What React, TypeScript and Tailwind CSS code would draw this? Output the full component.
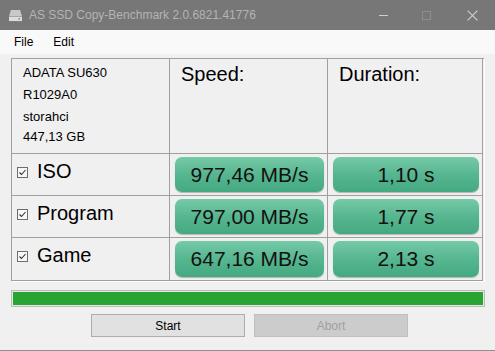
const rows = [
  { name: "ISO", speed: "977,46 MB/s", time: "1,10 s" },
  { name: "Program", speed: "797,00 MB/s", time: "1,77 s" },
  { name: "Game", speed: "647,16 MB/s", time: "2,13 s" },
];

function CheckBox() {
  return (
    <span className="w-[11px] h-[11px] border border-[#6d6d6d] bg-[#f7f7f7] flex items-center justify-center shrink-0">
      <svg viewBox="0 0 9 9" className="w-[9px] h-[9px]">
        <path d="M1.5 4.5 L3.5 6.5 L7.5 2" fill="none" stroke="#333" strokeWidth="1.1" />
      </svg>
    </span>
  );
}

function GreenBox({ text }: { text: string }) {
  return (
    <div className="h-full rounded-[7px] bg-gradient-to-b from-[#76caa7] via-[#56b690] to-[#44a981] shadow-[0_1px_1px_rgba(0,0,0,0.25)] flex items-center justify-center text-[21px] text-[#111]">
      {text}
    </div>
  );
}

export default function App() {
  return (
    <div className="w-[495px] h-[351px] bg-[#f0f0f0] flex flex-col overflow-hidden font-['Liberation_Sans',Arial,sans-serif]">
      {/* title bar */}
      <div className="h-[30px] bg-[#777777] flex items-center shrink-0">
        <svg viewBox="0 0 16 14" className="w-[15px] h-[13px] ml-[8px]">
          <path d="M3 1 H13 L15 8 H1 Z" fill="#c9c9c9" />
          <rect x="1" y="8.5" width="14" height="4.5" fill="#dcdcdc" />
          <rect x="11" y="10" width="2" height="1.5" fill="#8a8a8a" />
        </svg>
        <span className="ml-[6px] text-[12px] text-[#b4b4b4]">AS SSD Copy-Benchmark 2.0.6821.41776</span>
        <div className="ml-auto flex items-center h-full">
          <div className="w-[46px] flex justify-center pl-[6px]">
            <div className="w-[9px] h-px bg-[#cfcfcf]" />
          </div>
          <div className="w-[46px] flex justify-center">
            <div className="w-[9px] h-[9px] border border-[#8e8e8e]" />
          </div>
          <div className="w-[46px] flex justify-center">
            <svg viewBox="0 0 10 10" className="w-[11px] h-[11px]">
              <path d="M0.5 0.5 L9.5 9.5 M9.5 0.5 L0.5 9.5" stroke="#d0d0d0" strokeWidth="1" />
            </svg>
          </div>
        </div>
      </div>

      {/* menu */}
      <div className="h-[24px] bg-[#f9f9f9] flex items-center text-[12px] text-black shrink-0">
        <span className="ml-[14px]">File</span>
        <span className="ml-[20px]">Edit</span>
      </div>

      {/* table */}
      <div className="mt-[4px] ml-[11px] w-[473px] grid grid-cols-[158px_158px_155px] grid-rows-[95px_42px_42px_43px] border-t border-l border-[#a0a0a0] shadow-[1px_1px_0_#ffffff]">
        <div className="border-r border-b border-[#a0a0a0] pl-[11px] pt-[4px] text-[13px] text-black leading-[16px]">
          <div className="mt-[2px]">ADATA SU630</div>
          <div className="mt-[6px]">R1029A0</div>
          <div className="mt-[6px]">storahci</div>
          <div className="mt-[4px]">447,13 GB</div>
        </div>
        <div className="border-r border-b border-[#a0a0a0] pl-[11px] pt-0 text-[20px] text-black">Speed:</div>
        <div className="border-r border-b border-[#a0a0a0] pl-[11px] pt-0 text-[20px] text-black">Duration:</div>

        {rows.map((r) => (
          <div key={r.name} className="contents">
            <div className="border-r border-b border-[#a0a0a0] pl-[5px] pt-[6px] flex items-start gap-[9px] text-[20px] text-black leading-[23px]">
              <div className="mt-[7px]"><CheckBox /></div>
              <span>{r.name}</span>
            </div>
            <div className="border-r border-b border-[#a0a0a0] pl-[5px] pr-[3px] pt-[3px] pb-[3px]">
              <GreenBox text={r.speed} />
            </div>
            <div className="border-r border-b border-[#a0a0a0] pl-[5px] pr-[3px] pt-[3px] pb-[3px]">
              <GreenBox text={r.time} />
            </div>
          </div>
        ))}
      </div>

      {/* progress */}
      <div className="mt-[9px] ml-[11px] w-[474px] h-[17px] border border-[#bcbcbc] bg-[#e6e6e6] p-px">
        <div className="h-full w-full bg-[#29a332]" />
      </div>

      {/* buttons */}
      <div className="mt-[7px] ml-[91px] flex gap-[9px] text-[12px]">
        <button className="w-[154px] h-[23px] bg-[#e1e1e1] border border-[#adadad] text-black">Start</button>
        <button className="w-[154px] h-[23px] bg-[#cccccc] border border-[#bfbfbf] text-[#a0a0a0]">Abort</button>
      </div>

      <div className="mt-auto h-px bg-[#8f8f8f]" />
    </div>
  );
}
